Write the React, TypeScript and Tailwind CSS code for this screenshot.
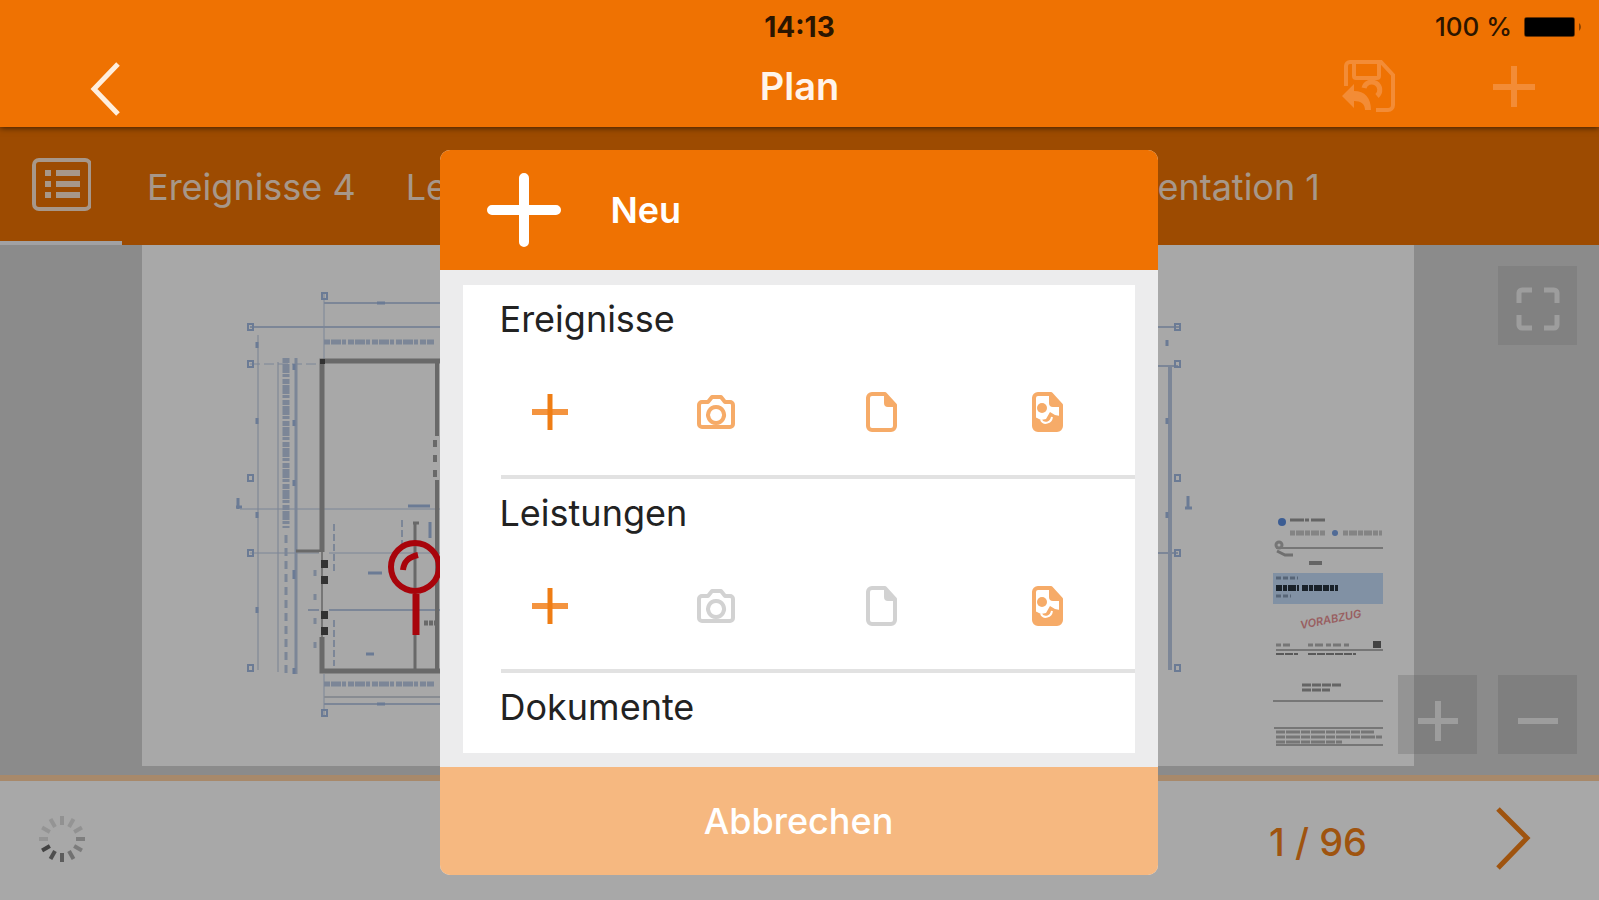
import { clsx } from "clsx";

interface IconProps {
  className?: string;
}

const PlusIcon = ({ className }: IconProps) => (
  <svg viewBox="0 0 36 36" className={className} aria-hidden="true">
    <path d="M0 18h36" stroke="#f4943f" strokeWidth="6" />
    <path d="M18 0v36" stroke="#ef7d14" strokeWidth="5" />
  </svg>
);

const CameraIcon = ({ className }: IconProps) => (
  <svg viewBox="0 0 40 36" className={className} fill="none" stroke="currentColor" strokeWidth="4" strokeLinejoin="round" aria-hidden="true">
    <path d="M6 8h6l4-5h9l4 5h5a3 3 0 0 1 3 3v19a3 3 0 0 1-3 3H6a3 3 0 0 1-3-3V11a3 3 0 0 1 3-3Z" />
    <path d="M20 13a8 8 0 1 0 .1 0Z" />
  </svg>
);

const FileIcon = ({ className }: IconProps) => (
  <svg viewBox="0 0 32 40" className={className} fill="none" stroke="currentColor" strokeWidth="4" strokeLinejoin="round" aria-hidden="true">
    <path d="M7 2h13l10 11v21a4 4 0 0 1-4 4H7a4 4 0 0 1-4-4V6a4 4 0 0 1 4-4Z" />
    <path d="M20 3v8a3 3 0 0 0 3 3h6Z" fill="currentColor" strokeWidth="2" />
  </svg>
);

const ImageFileIcon = ({ className }: IconProps) => (
  <svg viewBox="0 0 32 40" className={className} fill="none" stroke="currentColor" strokeLinejoin="round" aria-hidden="true">
    <path d="M7 2h13l10 11v21a4 4 0 0 1-4 4H7a4 4 0 0 1-4-4V6a4 4 0 0 1 4-4Z" strokeWidth="4" />
    <path d="M19 3v8a3 3 0 0 0 3 3h7Z" fill="currentColor" strokeWidth="2" />
    <circle cx="11" cy="16" r="5" fill="currentColor" stroke="none" />
    <path d="M4 25l6 3 5-1 4-7 5 3 5 1v14H4Z" fill="currentColor" stroke="none" />
    <path d="M10 28c3 5 10 3 11-3" stroke="#fff" strokeWidth="2" />
  </svg>
);

const RestoreIcon = ({ className }: IconProps) => (
  <svg viewBox="0 0 54 54" className={className} fill="none" stroke="currentColor" strokeWidth="4" aria-hidden="true">
    <path d="M4 27V7a4 4 0 0 1 4-4h31l12 13v30a5 5 0 0 1-5 5H34" />
    <path d="M12 5v12a2 2 0 0 0 2 2h21a2 2 0 0 0 2-2V5" />
    <path d="M22 29a8 8 0 1 1 13 8" strokeWidth="5" />
    <path d="M0 37l12-12v7c11 0 17 7 17 19h-6c0-6-4-9-11-9v7Z" fill="currentColor" stroke="none" />
  </svg>
);

const actions = [
  { name: "Neu", Icon: PlusIcon, size: "w-9 h-9" },
  { name: "Foto", Icon: CameraIcon, size: "w-10 h-9" },
  { name: "Datei", Icon: FileIcon, size: "w-8 h-10" },
  { name: "Bild", Icon: ImageFileIcon, size: "w-8 h-10" },
];

const sections = [
  { title: "Ereignisse", disabled: [] as string[] },
  { title: "Leistungen", disabled: ["Foto", "Datei"] },
  { title: "Dokumente", disabled: [] as string[] },
];

// Opacity of the twelve spinner bars, clockwise from the top
const spinner = [0.16, 0.14, 0.16, 0.3, 0.32, 0.4, 0.55, 0.65, 0.75, 0.14, 0.14, 0.14];

const leftMarks = [327, 364, 478, 553, 668];

function FloorPlan() {
  return (
    <svg viewBox="142 245 1272 521" className="block w-full bg-white" role="img" aria-label="Grundriss">
      {/* Dimension lines */}
      <g stroke="#bccbe6" strokeWidth="2" fill="none">
        <path d="M324 303h130M250 327h204M324 704h130" />
        <path d="M258 335v335" stroke="#dbe2ee" />
        <path d="M324 292v70M324 674v42" strokeWidth="1" />
        <path d="M296 358v316" strokeWidth="3" />
        <path d="M278 362v310" stroke="#dbe2ee" />
        <path d="M286 358v170" strokeWidth="7" strokeDasharray="5 1 9 1 3 2" />
        <path d="M286 535v140" strokeWidth="3" strokeDasharray="8 5" />
        <path d="M324 342h110M324 684h110" strokeWidth="5" strokeDasharray="6 1 10 1 4 2" />
        <path d="M240 509h204M250 553h194" strokeWidth="1" />
        <path d="M308 610h132" />
        <path d="M250 364h70" strokeWidth="1" strokeDasharray="10 4" />
        <path d="M324 697h120" stroke="#cfd5de" />
        <path d="M334 524v50M334 620v46M402 520v24" strokeDasharray="7 3" />
        <path d="M315 570v90" strokeWidth="3" strokeDasharray="6 18" />
        <path d="M1170 366v304" strokeWidth="4" />
        <path d="M1158 327h22M1158 366h20M1158 553h20" />
      </g>
      <g fill="none" stroke="#a3bbe2" strokeWidth="2">
        {leftMarks.map((y) => (
          <g key={y}>
            <rect x="248" y={y - 3} width="5" height="6" />
            <rect x="1175" y={y - 3} width="5" height="6" />
          </g>
        ))}
        <rect x="322" y="293" width="5" height="6" />
        <rect x="322" y="710" width="5" height="6" />
        <path d="M238 498v11M236 507h6M1188 496v13M1185 508h7" strokeWidth="3" />
        <path d="M257 342v6M257 418v6M257 512v6M257 607v6M1167 340v6M1167 418v6M1167 512v6M294 364v6M294 420v6M294 480v6M294 570v9M294 668v6" strokeWidth="3" />
        <path d="M377 303h8M377 704h8M368 573h14M366 654h8M408 506h22M430 522v16" strokeWidth="3" />
      </g>

      {/* Walls */}
      <g fill="none" stroke="#a0a0a0">
        <path d="M440 361H322V671h118" strokeWidth="5" />
        <path d="M437 361v75M437 480v190" strokeWidth="4" />
        <path d="M435 440v40" strokeWidth="4" strokeDasharray="7 8" />
        <path d="M296 551h24M415 524v146M413 523h6" strokeWidth="3" />
        <path d="M424 623h14" strokeWidth="5" strokeDasharray="4 1" />
      </g>
      <path d="M324 552v85" stroke="#fff" strokeWidth="10" />
      <path d="M322 552v85" stroke="#b4b4b4" strokeWidth="2" />
      <g fill="#4c4c4c">
        <rect x="321" y="560" width="7" height="8" />
        <rect x="321" y="576" width="7" height="8" />
        <rect x="321" y="611" width="7" height="8" />
        <rect x="321" y="627" width="7" height="8" />
        <rect x="320" y="359" width="5" height="5" />
      </g>

      {/* Pin */}
      <g fill="none" stroke="#ff0712">
        <circle cx="415" cy="567" r="24" strokeWidth="6" />
        <path d="M416 594v41" strokeWidth="7" />
        <path d="M403 570c1-9 6-13 15-15" strokeWidth="6" />
      </g>

      {/* Title block */}
      <g fill="none" stroke="#b4b4b4" strokeWidth="3">
        <circle cx="1282" cy="522" r="4" fill="#5c8ee0" stroke="none" />
        <circle cx="1335" cy="533" r="3" fill="#7ba3e4" stroke="none" />
        <path d="M1290 520h36" strokeDasharray="14 1 4 2" stroke="#999" />
        <path d="M1290 533h36M1343 533h39" strokeWidth="5" strokeDasharray="5 1 8 1" stroke="#c8c8c8" />
        <path d="M1276 548h107" strokeWidth="2" />
        <circle cx="1279" cy="545" r="3" />
        <path d="M1277 551l8 4h8" stroke="#aaa" />
        <path d="M1309 563h13" strokeWidth="4" stroke="#999" />
        <rect x="1273" y="573" width="110" height="31" fill="#c4dcf9" stroke="none" />
        <path d="M1276 578h22M1276 596h15" strokeDasharray="5 2" stroke="#8599b5" />
        <path d="M1276 588h23M1302 588h36" strokeWidth="6" strokeDasharray="6 1 4 1 8 1" stroke="#26323f" />
        <path d="M1276 645h14M1308 645h42" strokeDasharray="5 2 8 3" />
        <path d="M1276 650h107" strokeWidth="2" />
        <path d="M1276 654h22M1308 654h48" strokeWidth="2" strokeDasharray="8 1" stroke="#888" />
        <rect x="1373" y="641" width="8" height="7" fill="#666" stroke="none" />
        <path d="M1302 685h40M1302 690h28" strokeDasharray="9 1" stroke="#999" />
        <path d="M1273 701h110M1274 728h109M1276 745h107" strokeWidth="2" />
        <path d="M1276 732h98M1276 737h106M1276 742h66" strokeDasharray="9 1 14 1" stroke="#b4b4b4" />
      </g>
      <text x="1301" y="629" transform="rotate(-11 1301 629)" fill="#e88f92" fontSize="11" fontStyle="italic" fontWeight="600">
        VORABZUG
      </text>
    </svg>
  );
}

function NewDialog() {
  return (
    <div role="dialog" aria-labelledby="dialog-title" className="flex h-full w-[718px] flex-col overflow-hidden rounded-[10px] bg-[#ececed]">
      <div className="flex h-[120px] shrink-0 items-center gap-[50px] bg-[#ef7202] pl-[47px] text-white">
        <svg viewBox="0 0 74 74" className="h-[74px] w-[74px]" stroke="currentColor" strokeWidth="10" strokeLinecap="round" aria-hidden="true">
          <path d="M5 37h64M37 5v64" />
        </svg>
        <h2 id="dialog-title" className="text-[36px] leading-[44px] font-semibold">Neu</h2>
      </div>

      <div className="mx-[23px] mt-[15px] mb-[14px] min-h-0 flex-1 overflow-hidden bg-white">
        {sections.map((section) => (
          <section key={section.title}>
            <h3 className="pt-1.5 pb-0.5 pl-[37px] text-[36px] leading-[56px] text-[#222]">{section.title}</h3>
            <div className="grid h-[126px] grid-cols-4 px-[5px]">
              {actions.map(({ name, Icon, size }) => {
                const disabled = section.disabled.includes(name);
                return (
                  <button
                    key={name}
                    type="button"
                    disabled={disabled}
                    aria-label={`${section.title}: ${name}`}
                    className={clsx("flex items-center justify-center", disabled ? "text-[#d2d2d2]" : "text-[#f6ab68]")}
                  >
                    <Icon className={size} />
                  </button>
                );
              })}
            </div>
            <div className="ml-[38px] h-1 bg-[#e2e2e2]" />
          </section>
        ))}
      </div>

      <button type="button" className="h-[108px] shrink-0 bg-[#f6b880] text-[36px] leading-[44px] font-medium text-white">
        Abbrechen
      </button>
    </div>
  );
}

export default function App() {
  return (
    <div className="flex h-screen flex-col overflow-hidden bg-white font-[Inter,sans-serif]">
      <header className="relative z-10 shrink-0 bg-[#ef7202] pb-[5px] shadow-[0_1px_6px_rgba(0,0,0,0.6)]">
        {/* Status bar */}
        <div className="grid h-[50px] grid-cols-3 items-center pt-1 text-[26px] leading-8 font-medium text-[#2b1500]">
          <span className="col-start-2 text-center text-[28px] font-bold">14:13</span>
          <div className="flex items-center justify-end gap-3 pr-[15px]">
            <span>100 %</span>
            <svg viewBox="0 0 60 20" className="h-5 w-[60px]" aria-hidden="true">
              <rect x="0" y="0" width="51" height="20" rx="3" fill="#6d3401" />
              <rect x="1" y="1" width="49" height="18" rx="1" fill="#000" />
              <path d="M55 6a5 5 0 0 1 0 8Z" fill="#8a4201" />
            </svg>
          </div>
        </div>

        <div className="grid h-[72px] grid-cols-3 items-center">
          <button type="button" aria-label="Zurück" className="ml-[88px] w-fit text-[#ffeedd]">
            <svg viewBox="0 0 34 60" className="h-[60px] w-[34px]" fill="none" stroke="currentColor" strokeWidth="5" aria-hidden="true">
              <path d="M30 8L6 33l24 25" />
            </svg>
          </button>
          <h1 className="text-center text-[38px] leading-[46px] font-semibold text-[#fff4ea]">Plan</h1>
          <div className="flex items-center justify-end gap-[97px] pr-16 text-[#f38c36]">
            <button type="button" aria-label="Wiederherstellen">
              <RestoreIcon className="h-[54px] w-[54px]" />
            </button>
            <button type="button" aria-label="Hinzufügen">
              <svg viewBox="0 0 42 42" className="h-[42px] w-[42px]" stroke="currentColor" strokeWidth="6" aria-hidden="true">
                <path d="M0 22h42M21 1v41" />
              </svg>
            </button>
          </div>
        </div>
      </header>

      <main className="relative flex min-h-0 flex-1 flex-col">
        <nav className="flex h-[118px] shrink-0 items-stretch bg-[#ef7202] pr-[254px] text-[36px] leading-[44px] text-[#fde6d2]">
          <button type="button" aria-label="Liste" className="flex w-[122px] items-center justify-center border-b-4 border-[#f4f4f8]">
            <svg viewBox="0 0 60 54" className="h-[54px] w-[60px]" fill="none" stroke="currentColor" strokeWidth="4" aria-hidden="true">
              <rect x="3" y="3" width="56" height="49" rx="5" />
              <path d="M14 16h6M14 27h6M14 38h6M25 16h24M25 27h24M25 38h24" strokeWidth="6" />
            </svg>
          </button>
          <button type="button" className="px-[25px] pt-0.5">Ereignisse 4</button>
          <button type="button" className="px-[25px] pt-0.5">Leistungen</button>
          <button type="button" className="ml-auto px-[25px] pt-0.5">Dokumentation 1</button>
        </nav>

        <div className="relative min-h-0 flex-1 overflow-hidden bg-[#d4d4d4] pr-[185px] pl-[142px]">
          <FloorPlan />
          <button type="button" aria-label="Vollbild" className="absolute top-[21px] right-[22px] flex h-[79px] w-[79px] items-center justify-center bg-[#888]/20 text-[#efefef]">
            <svg viewBox="0 0 44 50" className="h-[50px] w-11" fill="none" stroke="currentColor" strokeWidth="5" aria-hidden="true">
              <path d="M3 22V12a3 3 0 0 1 3-3h10M28 9h10a3 3 0 0 1 3 3v10M41 34v10a3 3 0 0 1-3 3H28M16 47H6a3 3 0 0 1-3-3V34" />
            </svg>
          </button>
          <div className="absolute right-[22px] bottom-[21px] flex gap-[21px] text-[#efefef]">
            <button type="button" aria-label="Vergrößern" className="flex h-[79px] w-[79px] items-center justify-center bg-[#888]/25">
              <svg viewBox="0 0 40 40" className="mt-3 h-10 w-10" stroke="currentColor" strokeWidth="6" aria-hidden="true">
                <path d="M0 20h40M20 0v40" />
              </svg>
            </button>
            <button type="button" aria-label="Verkleinern" className="flex h-[79px] w-[79px] items-center justify-center bg-[#888]/25">
              <svg viewBox="0 0 40 40" className="mt-3 h-10 w-10" stroke="currentColor" strokeWidth="6" aria-hidden="true">
                <path d="M0 20h40" />
              </svg>
            </button>
          </div>
        </div>

        <footer className="flex h-[125px] shrink-0 items-center border-t-6 border-[#ffd0a2] bg-white pr-[66px] pl-[37px] text-[#f28018]">
          <svg viewBox="-25 -22 48 48" className="h-12 w-12 overflow-visible" stroke="#333" strokeWidth="4" role="img" aria-label="Lädt">
            {spinner.map((opacity, i) => (
              <path key={i} d="M0-23v9" transform={`rotate(${i * 30})`} opacity={opacity} />
            ))}
          </svg>
          <span className="ml-auto pt-0.5 text-[38px] leading-[46px] font-medium">1 / 96</span>
          <button type="button" aria-label="Weiter" className="ml-[128px]">
            <svg viewBox="0 0 38 64" className="h-16 w-[38px] overflow-visible" fill="none" stroke="currentColor" strokeWidth="5" aria-hidden="true">
              <path d="M3 0l29 29L3 59" />
            </svg>
          </button>
        </footer>

        <div className="absolute inset-0 flex justify-center bg-black/34 pt-[23px] pr-0.5 pb-[25px]">
          <NewDialog />
        </div>
      </main>
    </div>
  );
}
